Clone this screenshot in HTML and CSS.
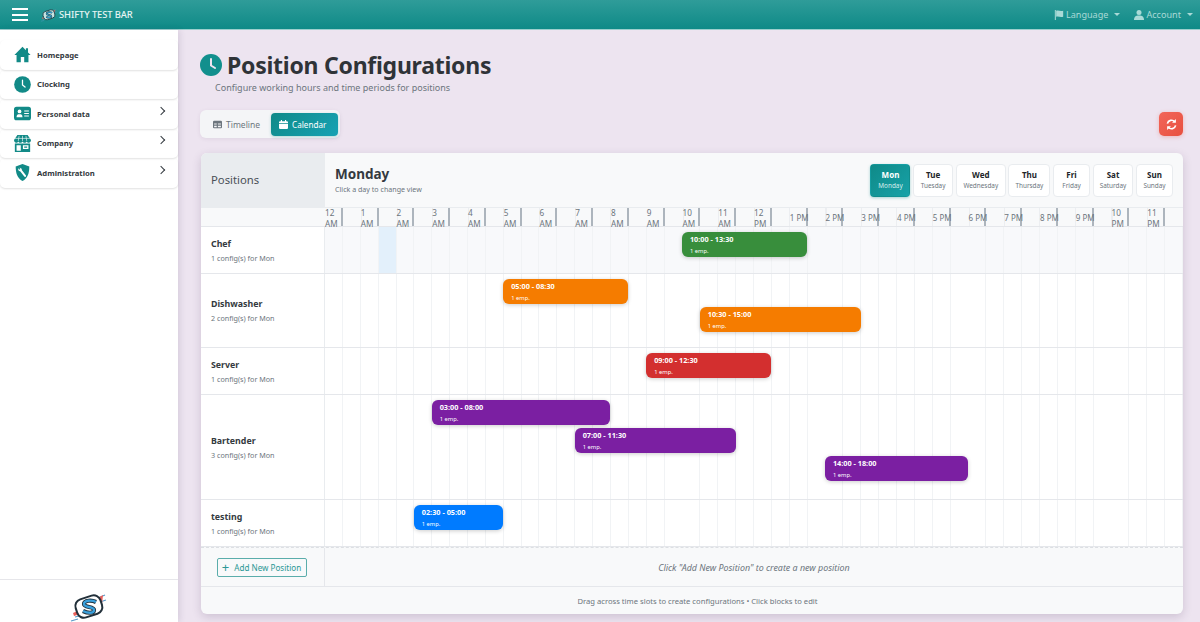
FILE: index.html
```html
<!DOCTYPE html>
<html lang="en">
<head>
<meta charset="utf-8">
<title>Position Configurations</title>
<link rel="stylesheet" href="styles.css">
</head>
<body>
<svg class="defs" width="0" height="0" aria-hidden="true">
  <symbol id="logo" viewBox="0 0 40 30">
    <path d="M2 29l7-2M29 6l7-3M31 10l6-2M6 25l4-1" stroke="#5b9bc9" stroke-width="1.2" fill="none"/>
    <path d="M4 21l9-4 1 4-9 3zM27 7l7-4-1 9-3-2z" fill="#e8605a"/>
    <rect x="7" y="5" width="26" height="19" rx="7" transform="rotate(-18 20 15)" fill="#fff" stroke="#22303a" stroke-width="2"/>
    <path d="M27 10c-4-2-12-2-12 2s10 2 10 6-7 3-11 1" fill="none" stroke="#22303a" stroke-width="4.200"/>
    <path d="M27 10c-4-2-12-2-12 2s10 2 10 6-7 3-11 1" fill="none" stroke="#3aa0dc" stroke-width="2.400"/>
  </symbol>
</svg>

<header class="topbar">
  <button class="burger" aria-label="Menu"><span></span><span></span><span></span></button>
  <svg class="brand-logo"><use href="#logo"/></svg>
  <span class="brand">SHIFTY TEST BAR</span>
  <nav class="top-nav">
    <span class="top-link">
      <svg class="top-icon" viewBox="0 0 12 12"><path d="M1 0h1.200v12H1zM2.600 1c3-1 4.500 1 8.400 0v7c-3.900 1-5.400-1-8.400 0z"/></svg>
      Language<i class="caret"></i>
    </span>
    <span class="top-link">
      <svg class="top-icon" viewBox="0 0 12 12"><circle cx="6" cy="3" r="3"/><path d="M0 12c0-4 2-5.500 6-5.500s6 1.500 6 5.500z"/></svg>
      Account<i class="caret"></i>
    </span>
  </nav>
</header>

<div class="layout">
  <aside class="sidebar">
    <ul class="menu">
      <li class="menu-item">
        <svg class="menu-icon" viewBox="0 0 20 20"><path d="M10 1L.5 10.500h2.500V19h5v-6h4v6h5v-8.500h2.500l-3-3V2.500h-2.500v2.500z"/></svg>
        <span class="menu-label">Homepage</span>
      </li>
      <li class="menu-item">
        <svg class="menu-icon" viewBox="0 0 20 20"><circle cx="10" cy="10" r="9.800"/><path d="M10 5v5.500l3 2.500" fill="none" stroke="#fff" stroke-width="1.500" stroke-linecap="round"/></svg>
        <span class="menu-label">Clocking</span>
      </li>
      <li class="menu-item">
        <svg class="menu-icon" viewBox="0 0 20 20"><rect y="2" width="20" height="16" rx="3"/><circle cx="6.500" cy="7.500" r="2.200" fill="#fff"/><path d="M3 14.500c0-3 1.300-3.500 3.500-3.500s3.500.5 3.500 3.500z" fill="#fff"/><path d="M12 7h5.500M12 10h5.500M12 13h5.500" stroke="#fff" stroke-width="1.300"/></svg>
        <span class="menu-label">Personal data</span>
        <i class="chev"></i>
      </li>
      <li class="menu-item">
        <svg class="menu-icon" viewBox="0 0 20 20"><path d="M4 0h12l4 6c0 2-1.200 3-2.500 3S15.500 8.500 15 7.500C14.500 8.500 13.500 9 12.500 9S10.500 8.500 10 7.500C9.500 8.500 8.500 9 7.500 9S5.500 8.500 5 7.500C4.500 8.500 3.800 9 2.500 9S0 8 0 6z"/><path d="M6 1L5 7M10 1v6M14 1l1 6M1 4h18" stroke="#fff" stroke-width=".7"/><path fill-rule="evenodd" d="M1 10h18v10H1zM3 12v6.500h5V12zM10.500 12v4.500H17V12zM12 13.500h3.500V15H12z"/></svg>
        <span class="menu-label">Company</span>
        <i class="chev"></i>
      </li>
      <li class="menu-item">
        <svg class="menu-icon" viewBox="0 0 20 20"><path d="M10 0l8 3c0 8-2 14-8 17C4 17 2 11 2 3z"/><path d="M7.500 7l5.500 7" stroke="#fff" stroke-width="2.400" stroke-linecap="round"/><circle cx="7" cy="6.500" r="2" fill="#fff"/><circle cx="6.500" cy="5.500" r=".9"/></svg>
        <span class="menu-label">Administration</span>
        <i class="chev"></i>
      </li>
    </ul>
    <div class="side-foot"><svg class="foot-logo"><use href="#logo"/></svg></div>
  </aside>

  <main class="content">
    <div class="title-row">
      <svg class="title-icon" viewBox="0 0 22 22"><circle cx="11" cy="11" r="11"/><path d="M11 5v6.500l4 2.500" fill="none" stroke="#ede4f0" stroke-width="2" stroke-linecap="round"/></svg>
      <h1 class="title">Position Configurations</h1>
    </div>
    <p class="subtitle">Configure working hours and time periods for positions</p>

    <div class="toolbar">
      <div class="tabs">
        <span class="tab">
          <svg class="tab-icon" viewBox="0 0 12 12"><path fill-rule="evenodd" d="M1.500 1h9A1.500 1.500 0 0 1 12 2.500v7a1.500 1.500 0 0 1-1.500 1.500h-9A1.500 1.500 0 0 1 0 9.500v-7A1.500 1.500 0 0 1 1.500 1zM1.500 4.500V6h3.500V4.500zM6.500 4.500V6h4V4.500zM1.500 7.500v2h3.500v-2zM6.500 7.500v2h4v-2z"/></svg>
          Timeline
        </span>
        <span class="tab tab-active">
          <svg class="tab-icon" viewBox="0 0 12 12"><path d="M2.500 0h1.500v1.500h4V0h1.500v1.500H10.500A1.500 1.500 0 0 1 12 3v1H0V3a1.500 1.500 0 0 1 1.500-1.500h1zM0 5h12v5.500a1.500 1.500 0 0 1-1.500 1.500h-9A1.500 1.500 0 0 1 0 10.500z"/></svg>
          Calendar
        </span>
      </div>
      <button class="refresh" aria-label="Refresh">
        <svg viewBox="0 0 12 12" width="11" height="11"><path d="M1.500 5a4.600 4.600 0 0 1 8-2" fill="none" stroke="#fff" stroke-width="1.800"/><path d="M10.800 0v4.200H6.600z" fill="#fff"/><path d="M10.500 7a4.600 4.600 0 0 1-8 2" fill="none" stroke="#fff" stroke-width="1.800"/><path d="M1.200 12V7.800h4.200z" fill="#fff"/></svg>
      </button>
    </div>

    <section class="card">
      <div class="card-head">
        <div class="head-left">Positions</div>
        <div class="head-main">
          <div>
            <h2 class="day-title">Monday</h2>
            <div class="day-hint">Click a day to change view</div>
          </div>
          <div class="days">
            <button class="day day-active"><b>Mon</b><small>Monday</small></button>
            <button class="day"><b>Tue</b><small>Tuesday</small></button>
            <button class="day"><b>Wed</b><small>Wednesday</small></button>
            <button class="day"><b>Thu</b><small>Thursday</small></button>
            <button class="day"><b>Fri</b><small>Friday</small></button>
            <button class="day"><b>Sat</b><small>Saturday</small></button>
            <button class="day"><b>Sun</b><small>Sunday</small></button>
          </div>
        </div>
      </div>

      <div class="hours-row">
        <div class="hours-left"></div>
        <div class="hours">
          <div class="hour hour-first"><span>12 AM</span></div>
          <div class="hour"><span>1 AM</span></div>
          <div class="hour"><span>2 AM</span></div>
          <div class="hour"><span>3 AM</span></div>
          <div class="hour"><span>4 AM</span></div>
          <div class="hour"><span>5 AM</span></div>
          <div class="hour"><span>6 AM</span></div>
          <div class="hour"><span>7 AM</span></div>
          <div class="hour"><span>8 AM</span></div>
          <div class="hour"><span>9 AM</span></div>
          <div class="hour"><span>10 AM</span></div>
          <div class="hour"><span>11 AM</span></div>
          <div class="hour"><span>12 PM</span></div>
          <div class="hour hour-one"><span>1 PM</span></div>
          <div class="hour hour-one"><span>2 PM</span></div>
          <div class="hour hour-one"><span>3 PM</span></div>
          <div class="hour hour-one"><span>4 PM</span></div>
          <div class="hour hour-one"><span>5 PM</span></div>
          <div class="hour hour-one"><span>6 PM</span></div>
          <div class="hour hour-one"><span>7 PM</span></div>
          <div class="hour hour-one"><span>8 PM</span></div>
          <div class="hour hour-one"><span>9 PM</span></div>
          <div class="hour"><span>10 PM</span></div>
          <div class="hour"><span>11 PM</span></div>
        </div>
      </div>

      <div class="row row-1 row-hover">
        <div class="row-left"><div class="pos-name">Chef</div><div class="pos-sub">1 config(s) for Mon</div></div>
        <div class="track">
          <div class="slot-hl" style="--s:3;--n:1"></div>
          <div class="block green" style="--s:20;--n:7;--l:0"><b>10:00 - 13:30</b><small>1 emp.</small></div>
        </div>
      </div>
      <div class="row row-2">
        <div class="row-left"><div class="pos-name">Dishwasher</div><div class="pos-sub">2 config(s) for Mon</div></div>
        <div class="track">
          <div class="block orange" style="--s:10;--n:7;--l:0"><b>05:00 - 08:30</b><small>1 emp.</small></div>
          <div class="block orange" style="--s:21;--n:9;--l:1"><b>10:30 - 15:00</b><small>1 emp.</small></div>
        </div>
      </div>
      <div class="row row-1">
        <div class="row-left"><div class="pos-name">Server</div><div class="pos-sub">1 config(s) for Mon</div></div>
        <div class="track">
          <div class="block red" style="--s:18;--n:7;--l:0"><b>09:00 - 12:30</b><small>1 emp.</small></div>
        </div>
      </div>
      <div class="row row-3">
        <div class="row-left"><div class="pos-name">Bartender</div><div class="pos-sub">3 config(s) for Mon</div></div>
        <div class="track">
          <div class="block purple" style="--s:6;--n:10;--l:0"><b>03:00 - 08:00</b><small>1 emp.</small></div>
          <div class="block purple" style="--s:14;--n:9;--l:1"><b>07:00 - 11:30</b><small>1 emp.</small></div>
          <div class="block purple" style="--s:28;--n:8;--l:2"><b>14:00 - 18:00</b><small>1 emp.</small></div>
        </div>
      </div>
      <div class="row row-1">
        <div class="row-left"><div class="pos-name">testing</div><div class="pos-sub">1 config(s) for Mon</div></div>
        <div class="track">
          <div class="block blue" style="--s:5;--n:5;--l:0"><b>02:30 - 05:00</b><small>1 emp.</small></div>
        </div>
      </div>

      <div class="add-row">
        <div class="add-left">
          <button class="add-btn"><span class="plus">+</span>Add New Position</button>
        </div>
        <div class="add-hint">Click "Add New Position" to create a new position</div>
      </div>
      <div class="card-foot">Drag across time slots to create configurations • Click blocks to edit</div>
    </section>
  </main>
</div>
</body>
</html>
```
FILE: styles.css
```css
* { box-sizing: border-box; }
html, body { margin: 0; height: 622px; overflow: hidden; }
body {
  font-family: "Noto Sans", "Open Sans", sans-serif;
  background: #ede4f0;
  color: #343a40;
  display: flex;
  flex-direction: column;
}
.defs { position: absolute; }
button { font-family: inherit; cursor: pointer; }

/* top bar */
.topbar {
  flex: 0 0 30px;
  display: flex;
  align-items: center;
  padding: 0 7px 0 12px;
  background: linear-gradient(180deg, #2f9c99 0%, #0e8a87 100%);
  border-bottom: 1px solid #9ccfcd;
  color: #fff;
}
.burger {
  width: 16px;
  height: 13px;
  padding: 0;
  background: none;
  border: 0;
  display: flex;
  flex-direction: column;
  justify-content: space-between;
  margin-right: 12px;
}
.burger span { display: block; height: 2px; background: #fff; }
.brand-logo { width: 18px; height: 14px; margin-right: 1px; opacity: .75; }
.brand { font-size: 9.400px; font-weight: 500; color: #e6f4f3; letter-spacing: -.1px; }
.top-nav { margin-left: auto; display: flex; gap: 14px; }
.top-link { display: flex; align-items: center; gap: 2px; font-size: 9.100px; color: #a9dad7; }
.top-icon { width: 10px; height: 10px; fill: #a9dad7; }
.caret {
  margin-left: 4px;
  border-top: 3px solid #a9dad7;
  border-left: 3px solid transparent;
  border-right: 3px solid transparent;
}

/* layout */
.layout { flex: 1; display: flex; min-height: 0; }
.sidebar {
  flex: 0 0 178px;
  background: #fff;
  box-shadow: 2px 0 6px rgba(60, 40, 80, .12);
  display: flex;
  flex-direction: column;
  padding-top: 10px;
}
.menu { list-style: none; margin: 0; padding: 0; flex: 1; }
.menu-item {
  height: 29.500px;
  display: flex;
  align-items: center;
  padding: 0 14px 0 14px;
  border-radius: 5px;
  box-shadow: 0 1px 2px rgba(0, 0, 0, .12);
}
.menu-icon { width: 17px; height: 17px; fill: #128a87; flex: none; margin-right: 6px; }
.menu-label { font-size: 7.700px; font-weight: 700; color: #343a40; }
.chev {
  margin-left: auto;
  margin-top: -6px;
  width: 6px;
  height: 6px;
  border-top: 1.300px solid #343a40;
  border-right: 1.300px solid #343a40;
  transform: rotate(45deg);
}
.side-foot {
  flex: 0 0 42px;
  border-top: 1px solid #e6e6ea;
  display: flex;
  justify-content: center;
  padding-top: 12px;
}
.foot-logo { width: 40px; height: 30px; }

/* content */
.content { flex: 1; min-width: 0; padding: 24px 17px 0 22px; }
.title-row { display: flex; align-items: center; gap: 5px; height: 22px; }
.title-icon { width: 22px; height: 22px; fill: #128f8d; flex: none; }
.title { margin: 0; font-size: 23px; font-weight: 700; color: #2f3338; line-height: 22px; letter-spacing: -.25px; }
.subtitle { margin: 5px 0 0 15px; font-size: 9px; line-height: 14px; color: #6c757d; }

.toolbar { display: flex; justify-content: space-between; align-items: center; margin-top: 15px; }
.tabs {
  display: flex;
  align-items: center;
  height: 28px;
  padding: 2px;
  background: #f4f5f7;
  border-radius: 6px;
  box-shadow: 0 1px 4px rgba(60, 40, 80, .08);
}
.tab {
  display: flex;
  align-items: center;
  gap: 4px;
  height: 23px;
  padding: 0 11px;
  font-size: 8.500px;
  color: #6c757d;
  border-radius: 4px;
}
.tab-icon { width: 9px; height: 9px; fill: #6c757d; }
.tab-active {
  padding: 0 12px 0 8px;
  font-size: 8.100px;
  color: #fff;
  background: linear-gradient(135deg, #0f8a88, #17a2b4);
  box-shadow: 0 1px 3px rgba(15, 138, 136, .3);
}
.tab-active .tab-icon { fill: #fff; }
.refresh {
  width: 24px;
  height: 24px;
  padding: 0;
  border: 0;
  border-radius: 5px;
  background: linear-gradient(135deg, #f2665a, #e8503f);
  box-shadow: 0 1px 4px rgba(232, 80, 63, .3);
  display: flex;
  align-items: center;
  justify-content: center;
}

/* card */
.card {
  margin: 15px 0 0 1px;
  width: 982px;
  height: 461px;
  background: #f8f9fa;
  border-radius: 6px;
  box-shadow: 0 3px 10px rgba(60, 40, 80, .18);
  overflow: hidden;
}
.card-head { display: flex; height: 54px; }
.head-left {
  flex: 0 0 124px;
  background: #e9ecef;
  display: flex;
  align-items: center;
  padding: 0 0 1px 10px;
  font-size: 11.300px;
  color: #495057;
}
.head-main {
  flex: 1;
  display: flex;
  align-items: center;
  justify-content: space-between;
  padding: 0 10px;
}
.day-title { margin: 0; font-size: 13.500px; line-height: 18px; font-weight: 700; color: #343a40; }
.day-hint { font-size: 7.100px; color: #6c757d; line-height: 12px; }
.days { display: flex; gap: 2.670px; }
.day {
  display: flex;
  flex-direction: column;
  align-items: center;
  justify-content: center;
  height: 33px;
  padding: 0 6px;
  min-width: 37px;
  background: #fff;
  border: 1px solid #e9ecef;
  border-radius: 4px;
  color: #212529;
}
.day:nth-child(-n+2) { min-width: 40px; }
.day:nth-child(3) { min-width: 50px; }
.day b { font-size: 8px; line-height: 12px; }
.day small { font-size: 6.400px; line-height: 10px; color: #6c757d; }
.day-active {
  background: linear-gradient(135deg, #0f8a88, #17a2a8);
  border-color: transparent;
  color: #fff;
  box-shadow: 0 1px 3px rgba(15, 138, 136, .35);
}
.day-active small { color: #d5eeed; }

/* hour header */
.hours-row {
  display: flex;
  height: 20px;
  border-top: 1px solid #e9ecef;
  border-bottom: 1px solid #e5e7eb;
}
.hours-left { flex: 0 0 124px; }
.hours { flex: 1; display: flex; min-width: 0; }
.hour {
  flex: 0 0 35.750px;
  min-width: 0;
  padding-left: 17.875px;
  border-right: 2px solid #adb5bd;
  background: linear-gradient(90deg, transparent 17.500px, #eceef1 17.500px, #eceef1 18.500px, transparent 18.500px);
}
.hour span {
  display: block;
  font-size: 8.200px;
  line-height: 10.500px;
  color: #6c757d;
  text-align: left;
  width: 16px;
}
.hour-first { flex-basis: 17.875px; padding-left: 0; background: none; }
.hour-one span { white-space: nowrap; padding-top: 5px; font-size: 8px; }

/* rows */
.row { display: flex; border-bottom: 1px solid #e5e7eb; background: #fff; }
.row-1 { height: 47px; }
.row-2 { height: 74px; }
.row-3 { height: 105px; }
.row-left {
  flex: 0 0 124px;
  display: flex;
  flex-direction: column;
  justify-content: center;
  padding-left: 10px;
  background: #fff;
  border-right: 1px solid #e9ecef;
}
.pos-name { font-size: 8.800px; font-weight: 700; line-height: 14px; color: #343a40; }
.pos-sub { font-size: 7.200px; line-height: 12px; color: #6c757d; margin-top: 1px; }
.track {
  position: relative;
  flex: 1;
  background-image: repeating-linear-gradient(90deg, transparent 0, transparent 16.875px, #f1f3f5 16.875px, #f1f3f5 17.875px);
}
.row-hover .track { background-color: #f8f9fb; }
.slot-hl {
  position: absolute;
  top: 0;
  bottom: 0;
  left: calc(var(--s) * 100% / 48);
  width: calc(var(--n) * 100% / 48);
  background: #e3f0fb;
}
.block {
  position: absolute;
  top: calc(5px + var(--l) * 28px);
  left: calc(var(--s) * 100% / 48 - .6px);
  width: calc(var(--n) * 100% / 48);
  height: 25px;
  padding: 2px 8px 0;
  border-radius: 6px;
  color: #fff;
  box-shadow: 0 1px 4px rgba(0, 0, 0, .2);
  display: flex;
  flex-direction: column;
}
.block b { font-size: 7.300px; line-height: 11px; }
.block small { font-size: 5.800px; line-height: 10px; margin-top: 1px; }
.green { background: #388e3c; }
.orange { background: #f57c00; }
.red { background: #d32f2f; }
.purple { background: #7b1fa2; }
.blue { background: #007bff; }

/* add row */
.add-row { display: flex; height: 40px; border-bottom: 1px solid #e5e7eb; border-top: 1px dashed #dcdfe3; }
.add-left {
  flex: 0 0 124px;
  display: flex;
  align-items: center;
  justify-content: center;
  border-right: 1px solid #e5e7eb;
  padding-right: 2px;
}
.add-btn {
  height: 19px;
  width: 90px;
  padding: 0;
  background: transparent;
  border: 1px solid #5aadab;
  border-radius: 2px;
  color: #2b9896;
  font-size: 8.100px;
  display: flex;
  align-items: center;
  justify-content: center;
  gap: 5px;
}
.plus { font-size: 13px; line-height: 10px; }
.add-hint {
  flex: 1;
  display: flex;
  align-items: center;
  justify-content: center;
  font-size: 8.900px;
  font-style: italic;
  color: #6c757d;
}
.card-foot {
  flex: 1;
  height: 27px;
  display: flex;
  align-items: center;
  justify-content: center;
  padding-left: 11px;
  font-size: 7.650px;
  color: #6c757d;
}
```
